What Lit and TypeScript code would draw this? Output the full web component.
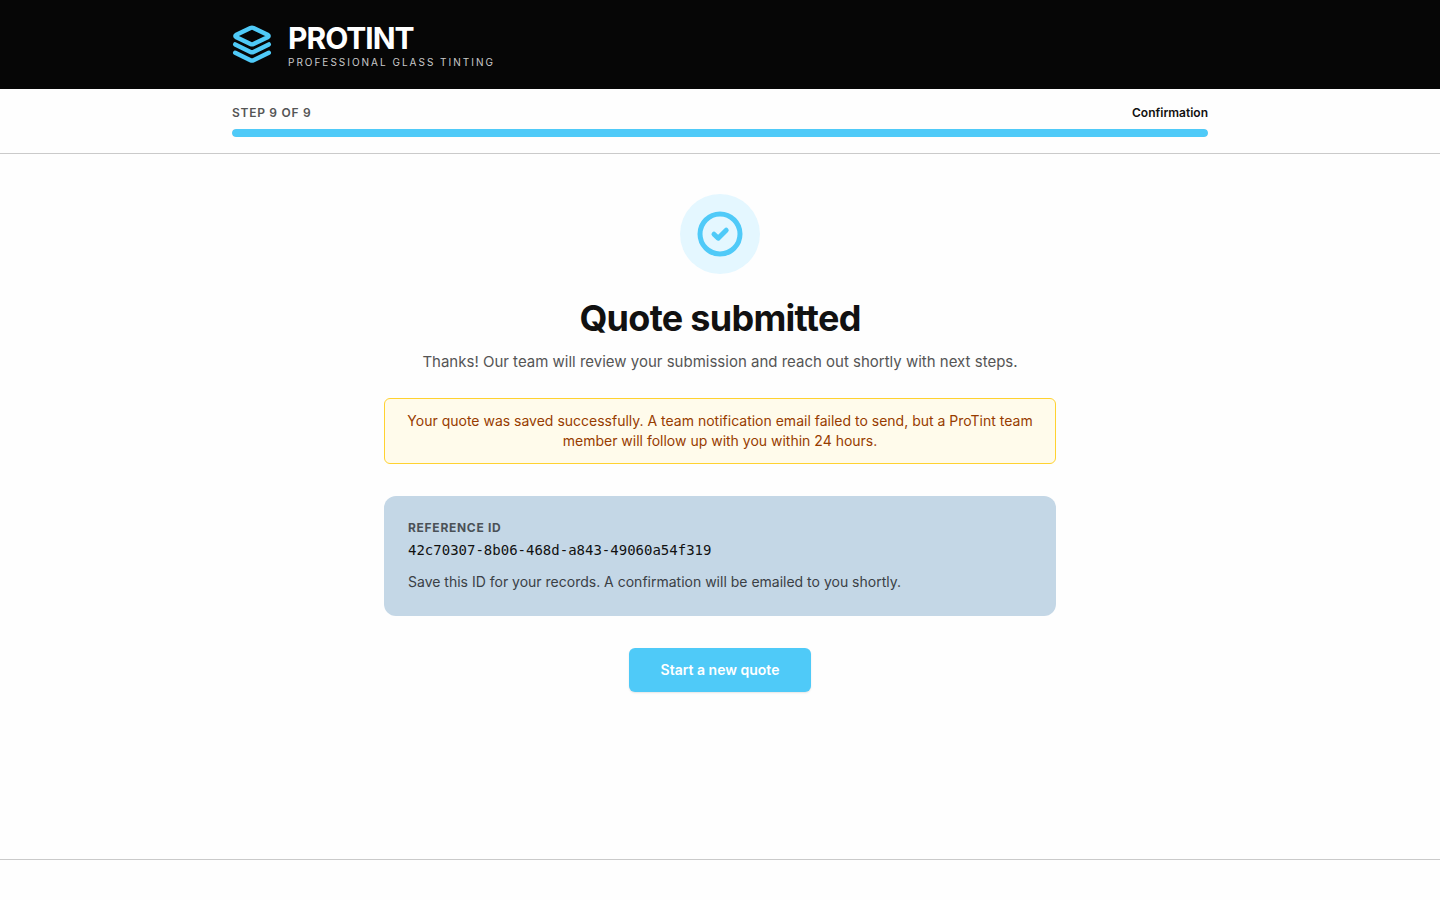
import { LitElement, html, css } from "lit";
import { customElement, property } from "lit/decorators.js";

@customElement("app-root")
export class AppRoot extends LitElement {
  @property({ type: Number }) step = 9;
  @property({ type: Number }) total = 9;
  @property() reference = "42c70307-8b06-468d-a843-49060a54f319";

  static styles = css`
    :host {
      display: flex;
      flex-direction: column;
      min-height: 100vh;
      background: #fefefe;
      color: #111111;
      font-family: Inter, "Liberation Sans", sans-serif;
      font-size: 14px;
      line-height: 20px;
    }
    * {
      box-sizing: border-box;
    }
    h1,
    p {
      margin: 0;
    }
    svg {
      display: block;
      fill: none;
      stroke: #4fcaf8;
      stroke-linecap: round;
      stroke-linejoin: round;
    }
    .container {
      max-width: 1024px;
      margin: 0 auto;
      padding: 0 24px;
    }
    .top {
      background: #060606;
      padding: 20px 0;
    }
    .brand {
      display: flex;
      align-items: center;
      gap: 16px;
    }
    .name {
      color: #ffffff;
      font-size: 30px;
      line-height: 36px;
      font-weight: 700;
      letter-spacing: -1px;
    }
    .tagline {
      color: #cacaca;
      font-size: 10px;
      line-height: 13px;
      letter-spacing: 2px;
      text-transform: uppercase;
    }
    .steps {
      border-bottom: 1px solid #cacaca;
      padding: 16px 0;
    }
    .steps-row {
      display: flex;
      justify-content: space-between;
      margin-bottom: 8px;
      font-size: 12px;
      line-height: 16px;
      font-weight: 600;
    }
    .steps-count {
      color: #555555;
      letter-spacing: 0.06em;
      text-transform: uppercase;
    }
    .track {
      height: 8px;
      border-radius: 4px;
      background: #e5e5e5;
      overflow: hidden;
    }
    .bar {
      height: 100%;
      border-radius: 4px;
      background: #4fcaf8;
    }
    main {
      flex: 1;
      width: 100%;
      max-width: 720px;
      margin: 0 auto;
      padding: 40px 24px;
      display: flex;
      flex-direction: column;
      align-items: center;
      text-align: center;
    }
    .badge {
      display: grid;
      place-items: center;
      width: 80px;
      height: 80px;
      margin-bottom: 24px;
      border-radius: 50%;
      background: #e4f7ff;
    }
    h1 {
      font-size: 36px;
      line-height: 40px;
      font-weight: 700;
      letter-spacing: -0.02em;
    }
    .lead {
      margin-top: 12px;
      color: #555555;
      font-size: 15px;
      line-height: 24px;
    }
    .notice {
      width: 100%;
      margin-top: 24px;
      padding: 12px 16px;
      border: 1px solid #ffd230;
      border-radius: 6px;
      background: #fffbeb;
      color: #973c00;
    }
    .card {
      width: 100%;
      margin: 32px 0;
      padding: 24px;
      border-radius: 12px;
      background: #c4d7e6;
      text-align: left;
    }
    .card-label {
      color: #4a5157;
      font-size: 12px;
      line-height: 16px;
      font-weight: 700;
      letter-spacing: 0.06em;
      text-transform: uppercase;
    }
    .card-id {
      margin-top: 4px;
      font-family: "DejaVu Sans Mono", monospace;
    }
    .card-note {
      margin-top: 12px;
      color: #3a4045;
    }
    button {
      height: 44px;
      padding: 0 32px;
      border: 0;
      border-radius: 6px;
      background: #4fcaf8;
      color: #ffffff;
      font: inherit;
      font-weight: 600;
      box-shadow: 0 1px 2px rgba(0, 0, 0, 0.1);
      cursor: pointer;
    }
    footer {
      border-top: 1px solid #cacaca;
      padding: 20px 0;
    }
  `;

  render() {
    const percent = (this.step / this.total) * 100;
    return html`
      <header class="top">
        <div class="container brand">
          <svg width="40" height="40" viewBox="0 0 40 40" stroke-width="4.4" aria-hidden="true">
            <path d="M18.5 3 4.4 9.8Q2.2 11 4.4 12.2L18.5 19Q20 19.7 21.5 19L35.6 12.2Q37.8 11 35.6 9.8L21.5 3Q20 2.3 18.5 3Z" />
            <path d="M3.2 19.4 18.5 26.9Q20 27.6 21.5 26.9L36.8 19.4" />
            <path d="M3.2 27.7 18.5 35.2Q20 35.9 21.5 35.2L36.8 27.7" />
          </svg>
          <div>
            <div class="name">PROTINT</div>
            <div class="tagline">Professional Glass Tinting</div>
          </div>
        </div>
      </header>
      <section class="steps" aria-label="Progress">
        <div class="container">
          <div class="steps-row">
            <span class="steps-count">Step ${this.step} of ${this.total}</span>
            <span>Confirmation</span>
          </div>
          <div class="track"><div class="bar" style="width:${percent}%"></div></div>
        </div>
      </section>
      <main>
        <div class="badge">
          <svg width="48" height="48" viewBox="0 0 48 48" stroke-width="5" aria-hidden="true">
            <circle cx="24" cy="24" r="20" />
            <path d="m18 24.2 4.2 4 8-8" />
          </svg>
        </div>
        <h1>Quote submitted</h1>
        <p class="lead">Thanks! Our team will review your submission and reach out shortly with next steps.</p>
        <p class="notice">
          Your quote was saved successfully. A team notification email failed to send, but a ProTint team member will
          follow up with you within 24 hours.
        </p>
        <section class="card">
          <p class="card-label">Reference ID</p>
          <p class="card-id">${this.reference}</p>
          <p class="card-note">Save this ID for your records. A confirmation will be emailed to you shortly.</p>
        </section>
        <button type="button">Start a new quote</button>
      </main>
      <footer></footer>
    `;
  }
}
